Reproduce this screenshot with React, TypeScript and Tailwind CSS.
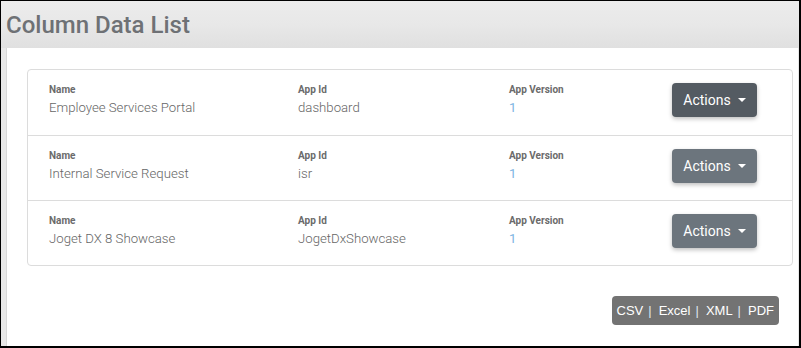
import React from "react";

const rows = [
  { name: "Employee Services Portal", id: "dashboard", ver: "1", dark: true },
  { name: "Internal Service Request", id: "isr", ver: "1", dark: false },
  { name: "Joget DX 8 Showcase", id: "JogetDxShowcase", ver: "1", dark: false },
];

function Field({ label, value, blue }: { label: string; value: string; blue?: boolean }) {
  return (
    <div className="flex flex-col">
      <div className="text-[10px] font-bold leading-[13px] text-[#6b6b6b]">{label}</div>
      <div
        className={`mt-[3px] text-[13.2px] leading-[18px] ${blue ? "font-normal text-[#7db5e2]" : "font-light text-[#666]"}`}
      >
        {value}
      </div>
    </div>
  );
}

const exportsList = ["CSV", "Excel", "XML", "PDF"];

export default function App() {
  return (
    <div
      className="w-[801px] h-[348px] overflow-hidden border-t border-l border-r-2 border-b-2 border-black bg-[#e8e8e8] flex flex-col"
      style={{ fontFamily: "Roboto, 'Noto Sans', sans-serif" }}
    >
      <div className="h-[47px] shrink-0 bg-gradient-to-b from-[#ececec] via-[#e8e8e8] to-[#e0e0e0] pl-[5px] pt-[9px]">
        <h1 className="text-[24px] font-medium leading-[30px] text-[#6e7175]">Column Data List</h1>
      </div>
      <div className="flex-1 ml-[5px] mr-[1px] bg-white pt-[21px] pl-[20px] pr-[5px] border-l border-[#d8d8d8]">
        <div className="rounded-[4px] border border-[#dcdcdc]">
          {rows.map((r, i) => (
            <div
              key={r.id}
              className={`flex items-start h-[65px] pl-[21px] ${i > 0 ? "border-t border-[#dcdcdc]" : ""}`}
            >
              <div className="w-[249px] pt-[13px]">
                <Field label="Name" value={r.name} />
              </div>
              <div className="w-[211px] pt-[13px]">
                <Field label="App Id" value={r.id} />
              </div>
              <div className="w-[163px] pt-[13px]">
                <Field label="App Version" value={r.ver} blue />
              </div>
              <div className="pt-[13px]">
                <button
                  className={`flex items-center h-[34px] w-[85px] justify-center gap-[7px] rounded-[4px] text-white text-[14px] shadow-[0_2px_4px_rgba(0,0,0,0.25)] ${r.dark ? "bg-[#545b62]" : "bg-[#6c757d]"}`}
                >
                  <span>Actions</span>
                  <span className="w-0 h-0 border-l-[4px] border-r-[4px] border-t-[4px] border-l-transparent border-r-transparent border-t-white" />
                </button>
              </div>
            </div>
          ))}
        </div>
        <div className="flex justify-end mt-[30px] pr-[14px]">
          <div
            className="flex items-center h-[29px] px-[5px] rounded-[4px] bg-[#737373] text-white text-[13px]"
            style={{ fontFamily: "'Liberation Sans', Arial, sans-serif" }}
          >
            {exportsList.map((e, i) => (
              <React.Fragment key={e}>
                <span>{e}</span>
                {i < exportsList.length - 1 && (
                  <span className="ml-[5px] mr-[7px] text-[#dde6ee]">|</span>
                )}
              </React.Fragment>
            ))}
          </div>
        </div>
      </div>
    </div>
  );
}
